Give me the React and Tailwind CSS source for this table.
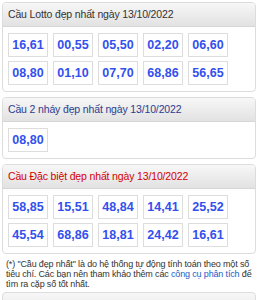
import React from 'react';

const LOTTO = ['16,61', '00,55', '05,50', '02,20', '06,60', '08,80', '01,10', '07,70', '68,86', '56,65'];
const NHAY = ['08,80'];
const DACBIET = ['58,85', '15,51', '48,84', '14,41', '25,52', '45,54', '68,86', '18,81', '24,42', '16,61'];

const Card = ({ title, titleCls, nums }) => (
  <div className="mx-[2px] mb-[5px] border border-[#dcdcdc] rounded-[4px] bg-white overflow-hidden">
    <div className="h-[24px] px-[5px] flex items-center bg-gradient-to-b from-[#f7f7f7] to-[#e2e2e2] border-b border-[#d6d6d6]">
      <span className={`text-[10.5px] tracking-[-0.15px] leading-none whitespace-nowrap ${titleCls}`}>{title}</span>
    </div>
    <div className="px-[5px] pt-[6px] pb-[6px] flex flex-wrap gap-x-[5px] gap-y-[4px]">
      {nums.map((n, i) => (
        <div key={i} className="w-[40px] h-[24px] border border-[#dddddd] bg-white flex items-center justify-center">
          <span className="text-[12.5px] font-bold text-[#3350ee]">{n}</span>
        </div>
      ))}
    </div>
  </div>
);

export default function App() {
  return (
    <div className="w-[258px] h-[300px] bg-white pt-[2px] overflow-hidden" style={{ fontFamily: '"Liberation Sans", Arial, sans-serif' }}>
      <Card title="Cầu Lotto đẹp nhất ngày 13/10/2022" titleCls="text-[#333333]" nums={LOTTO} />
      <Card title="Cầu 2 nháy đẹp nhất ngày 13/10/2022" titleCls="text-[#2c3b8e]" nums={NHAY} />
      <Card title="Cầu Đặc biệt đẹp nhất ngày 13/10/2022" titleCls="text-[#d40000]" nums={DACBIET} />
      <div className="px-[6px] text-[9px] tracking-[-0.15px] leading-[10px] text-[#333333] whitespace-nowrap">
        <div>(*) "Cầu đẹp nhất" là do hệ thống tự động tính toán theo một số</div>
        <div>
          tiêu chí. Các bạn nên tham khảo thêm các <span className="text-[#1a5cc8]">công cụ phân tích</span> để
        </div>
        <div>tìm ra cặp số tốt nhất.</div>
      </div>
      <div className="mx-[2px] mt-[3px] h-[30px] border border-[#dcdcdc] rounded-[4px] bg-gradient-to-b from-[#f7f7f7] to-[#e2e2e2]" />
    </div>
  );
}
